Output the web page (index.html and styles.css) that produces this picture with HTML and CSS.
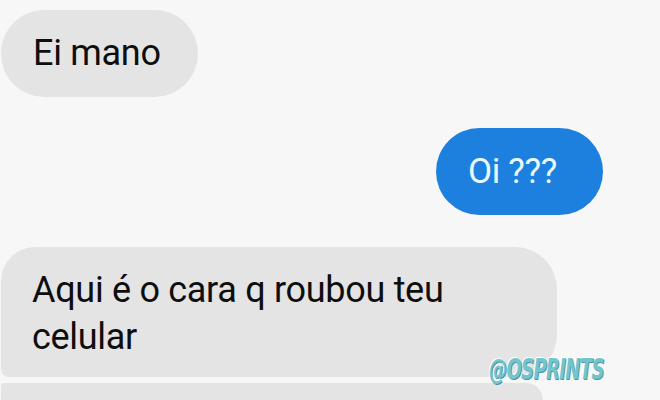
FILE: index.html
```html
<!DOCTYPE html>
<html lang="pt">
<head>
<meta charset="utf-8">
<link rel="stylesheet" href="styles.css">
</head>
<body>
<div class="chat">
  <div class="bubble in single">Ei mano</div>
  <div class="bubble out single">Oi ???</div>
  <div class="bubble in first">Aqui é o cara q roubou teu<br>celular</div>
  <div class="bubble in next"></div>
</div>
<div class="watermark">@OSPRINTS</div>
</body>
</html>
```
FILE: styles.css
```css
html, body {
  margin: 0;
  padding: 0;
  background: #f7f7f7;
  width: 660px;
  height: 400px;
  overflow: hidden;
  position: relative;
}
.chat {
  display: flex;
  flex-direction: column;
  align-items: flex-start;
  padding-top: 10px;
  font-family: Roboto, "Noto Sans", sans-serif;
  font-size: 36px;
  letter-spacing: -0.3px;
  line-height: 47px;
}
.bubble {
  box-sizing: border-box;
  background: #e4e4e4;
  color: #0e0e0e;
  margin-left: 1px;
}
.single {
  height: 87px;
  display: flex;
  align-items: center;
  border-radius: 44px;
}
.in.single {
  padding: 0 37px 0 32px;
}
.out {
  align-self: flex-end;
  margin-right: 57px;
  margin-top: 31px;
  background: #1d80df;
  color: #eafcff;
  padding: 0 46px 0 32px;
  font-size: 35px;
}
.first {
  margin-top: 32px;
  width: 556px;
  padding: 20px 30px 16px 31px;
  border-radius: 34px 42px 42px 8px;
}
.next {
  margin-top: 6px;
  width: 542px;
  height: 17px;
  border-radius: 8px 42px 0 0;
}
.watermark {
  position: absolute;
  left: 489px;
  top: 353px;
  font-family: "DejaVu Sans Condensed", "DejaVu Sans", sans-serif;
  font-weight: bold;
  font-style: italic;
  font-size: 28px;
  letter-spacing: -1px;
  color: #74c4cc;
  text-shadow: 1px 1px 0 #4a93a0, -1px -1px 0 #ffffff;
  transform: scaleX(0.72);
  transform-origin: left center;
}
```
